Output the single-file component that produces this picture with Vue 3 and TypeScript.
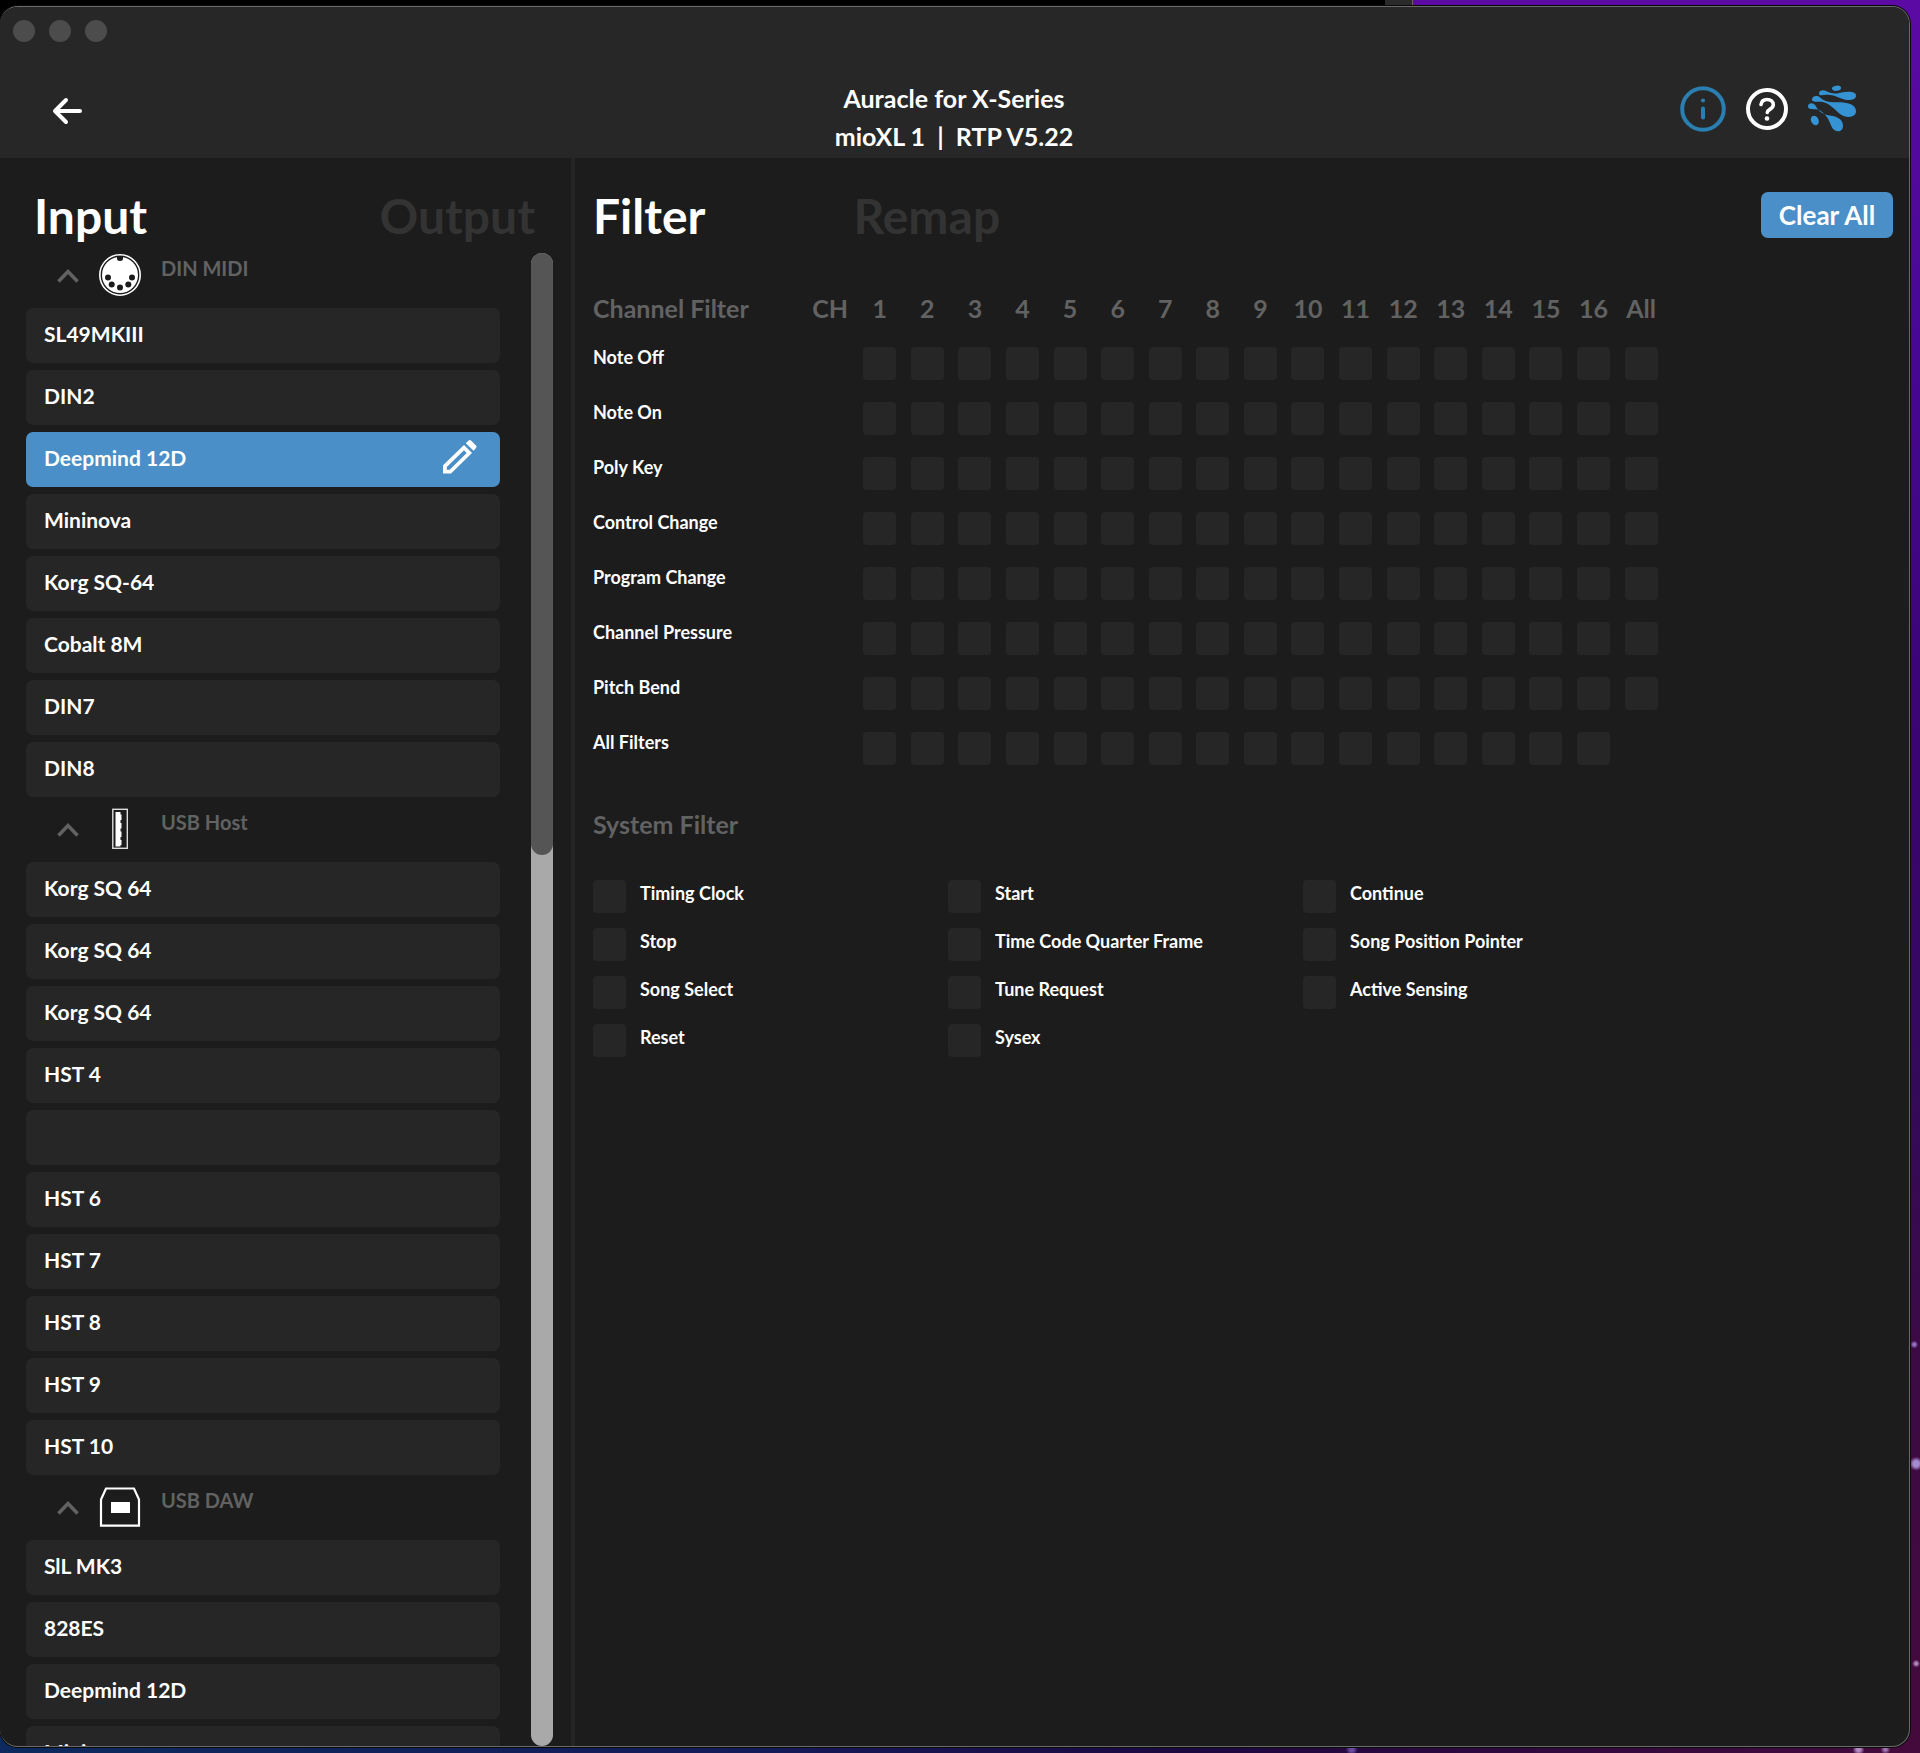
<script setup lang="ts">
import { ref } from 'vue'

type GroupIcon = 'din' | 'host' | 'daw'

interface PortGroup {
  name: string
  icon: GroupIcon
  ports: string[]
}

const groups: PortGroup[] = [
  {
    name: 'DIN MIDI',
    icon: 'din',
    ports: ['SL49MKIII', 'DIN2', 'Deepmind 12D', 'Mininova', 'Korg SQ-64', 'Cobalt 8M', 'DIN7', 'DIN8'],
  },
  {
    name: 'USB Host',
    icon: 'host',
    ports: ['Korg SQ 64', 'Korg SQ 64', 'Korg SQ 64', 'HST 4', '', 'HST 6', 'HST 7', 'HST 8', 'HST 9', 'HST 10'],
  },
  {
    name: 'USB DAW',
    icon: 'daw',
    ports: ['SlL MK3', '828ES', 'Deepmind 12D', 'Mininova'],
  },
]

const selected = ref('0-2')

const channels: string[] = [...Array.from({ length: 16 }, (_, i) => String(i + 1)), 'All']

const messages: string[] = [
  'Note Off',
  'Note On',
  'Poly Key',
  'Control Change',
  'Program Change',
  'Channel Pressure',
  'Pitch Bend',
  'All Filters',
]

const systemFilters: string[] = [
  'Timing Clock',
  'Start',
  'Continue',
  'Stop',
  'Time Code Quarter Frame',
  'Song Position Pointer',
  'Song Select',
  'Tune Request',
  'Active Sensing',
  'Reset',
  'Sysex',
]

const channelState = ref<Record<string, boolean>>({})
const systemState = ref<Record<string, boolean>>({})

function hasBox(message: string, channel: string): boolean {
  return !(message === 'All Filters' && channel === 'All')
}

function clearAll(): void {
  channelState.value = {}
  systemState.value = {}
}
</script>

<template>
  <div class="desktop">
    <div class="window-behind"></div>
    <div class="window">
      <header class="header">
        <div class="lights"><i></i><i></i><i></i></div>
        <div class="toolbar">
          <button class="icon-button" aria-label="Back">
            <svg width="32" height="34" viewBox="0 0 32 34" fill="none" stroke="#fff" stroke-width="4" stroke-linecap="round" stroke-linejoin="round">
              <path d="M28 19H3M14 8 3 19l11 11" />
            </svg>
          </button>
          <h1 class="title">Auracle for X-Series<br />mioXL 1 &nbsp;|&nbsp; RTP V5.22</h1>
          <div class="actions">
            <button class="icon-button" aria-label="Info">
              <svg width="46" height="46" viewBox="0 0 46 46" fill="none" stroke="#2a7eb0">
                <circle cx="23" cy="23" r="20.8" stroke-width="4" />
                <path d="M23 22.5v9" stroke-width="4" stroke-linecap="round" />
                <circle cx="23" cy="14.5" r="2.1" fill="#2a7eb0" stroke="none" />
              </svg>
            </button>
            <button class="icon-button" aria-label="Help">
              <svg width="44" height="44" viewBox="0 0 44 44" fill="none" stroke="#fff" stroke-width="4">
                <circle cx="22" cy="22" r="19" />
                <path d="M16 17.5c.6-3.5 3-5 6-5 3.6 0 6.3 2.2 6.3 5.3 0 4.6-6 4.400-6 7.600" stroke-width="3.6" stroke-linecap="round" />
                <circle cx="22" cy="31.5" r="2.3" fill="#fff" stroke="none" />
              </svg>
            </button>
            <button class="icon-button" aria-label="iConnectivity">
              <svg width="48" height="48" viewBox="0 0 48 48" fill="#3592d3">
                <ellipse cx="28.5" cy="3.2" rx="4.600" ry="2.600" transform="rotate(-8 28.5 3.2)" />
                <path d="M11 8.500C11 5.500 15 4.500 18 6c4 2 8 3 12 2.200C35 6.800 48 5 48 10.500c0 5.500-9 5.300-14 3.300-6-2.800-12-4.500-16-4-4 .7-7 1-7-1.300Z" />
                <path d="M4 14.500C4 11 9 10 12 12.500c4 3.500 9 5 15 4.800C36 16.800 48 18 48 26c0 7-10 7.500-16 3-5-4-9-9.500-17-12-4-1-11 1-11-2.500Z" />
                <path d="M0 21.500C0 18 5 17 7.500 20.500 10 25 13 28.500 19 30c8 1 16 3 16 11 0 7-9 7-11.500.5C21 35 18 28.500 11 25 7 23.500 0 25.500 0 21.500Z" />
                <ellipse cx="6.800" cy="35.500" rx="3.800" ry="5" transform="rotate(-25 6.800 35.500)" />
              </svg>
            </button>
          </div>
        </div>
      </header>

      <div class="body">
        <aside class="sidebar">
          <nav class="tabs side-tabs">
            <button class="tab active">Input</button>
            <button class="tab">Output</button>
          </nav>
          <div class="scroller">
            <div class="port-list">
              <section v-for="(group, g) in groups" :key="group.name" class="group">
                <div class="group-head">
                  <button class="icon-button" :aria-label="`Collapse ${group.name}`">
                    <svg width="22" height="16" viewBox="0 0 22 16" fill="none" stroke="#626262" stroke-width="3.5">
                      <path d="m1.500 13.500 9.500-10 9.500 10" />
                    </svg>
                  </button>
                  <svg v-if="group.icon === 'din'" width="42" height="42" viewBox="0 0 42 42">
                    <circle cx="21" cy="21" r="20.2" fill="#1c1c1c" stroke="#fff" stroke-width="1.6" />
                    <circle cx="21" cy="21" r="18" fill="#fff" />
                    <path d="M18 2.500h6v2a3 2.500 0 0 1-6 0Z" fill="#1c1c1c" />
                    <g fill="#1c1c1c">
                      <circle cx="9" cy="23.5" r="3" />
                      <circle cx="12.7" cy="30.5" r="3" />
                      <circle cx="21" cy="33.5" r="3" />
                      <circle cx="29.3" cy="30.5" r="3" />
                      <circle cx="33" cy="23.5" r="3" />
                    </g>
                  </svg>
                  <svg v-else-if="group.icon === 'host'" width="42" height="42" viewBox="0 0 42 42">
                    <rect x="13.8" y="1.3" width="14.5" height="39" fill="none" stroke="#ddd" stroke-width="1.4" />
                    <path d="M16.500 4h5v2.500h1v5.500h-1v3h1v5.500h-1v3h1V29h-1v3h1v5h-1v1.500h-5Z" fill="#fff" />
                  </svg>
                  <svg v-else width="42" height="42" viewBox="0 0 42 42">
                    <path d="M7 2.500h28l5 11v26.200H2V13.500Z" fill="none" stroke="#fff" stroke-width="2.2" />
                    <rect x="12" y="16" width="19" height="11" fill="#fff" />
                  </svg>
                  <span class="group-name">{{ group.name }}</span>
                </div>
                <button
                  v-for="(port, p) in group.ports"
                  :key="p"
                  class="port"
                  :class="{ selected: selected === `${g}-${p}` }"
                  @click="selected = `${g}-${p}`"
                >
                  <span>{{ port }}</span>
                  <svg v-if="selected === `${g}-${p}`" width="36" height="36" viewBox="0 0 36 36" fill="#fff">
                    <path d="M1 34.500v-8.200L22 6l8 8L9 34.500Zm3.800-3.800h2.900L24.700 14l-2.700-2.700L4.800 27.900Z" fill-rule="evenodd" />
                    <path d="m23.800 4.200 2.800-2.700q1.200-1 2.400 0l5 5q1.200 1.200 0 2.400l-2.400 2.800Z" />
                  </svg>
                </button>
              </section>
            </div>
            <div class="track"><div class="thumb"></div></div>
          </div>
        </aside>

        <main class="main">
          <div class="main-head">
            <nav class="tabs main-tabs">
              <button class="tab active">Filter</button>
              <button class="tab">Remap</button>
            </nav>
            <button class="clear" @click="clearAll">Clear All</button>
          </div>

          <table class="channels">
            <thead>
              <tr>
                <th class="label-col" scope="col">
                  <div class="corner"><span>Channel Filter</span><span>CH</span></div>
                </th>
                <th v-for="channel in channels" :key="channel" scope="col">{{ channel }}</th>
              </tr>
            </thead>
            <tbody>
              <tr v-for="message in messages" :key="message">
                <th scope="row">{{ message }}</th>
                <td v-for="channel in channels" :key="channel">
                  <input
                    v-if="hasBox(message, channel)"
                    v-model="channelState[`${message}-${channel}`]"
                    type="checkbox"
                    class="box"
                    :aria-label="`${message}, channel ${channel}`"
                  />
                </td>
              </tr>
            </tbody>
          </table>

          <h2 class="system-title">System Filter</h2>
          <div class="system">
            <label v-for="name in systemFilters" :key="name" class="system-item">
              <input v-model="systemState[name]" type="checkbox" class="box" />
              <span>{{ name }}</span>
            </label>
          </div>
        </main>
      </div>
    </div>
  </div>
</template>

<style>
body {
  margin: 0;
  background: #000;
}
</style>

<style scoped>
.desktop {
  box-sizing: border-box;
  position: relative;
  height: 100vh;
  padding: 6px 10px 6px 0;
  overflow: hidden;
  font-family: Lato, sans-serif;
  font-weight: 700;
  color: #fff;
  background:
    linear-gradient(90deg, #000 73%, transparent 73%) top / 100% 24px no-repeat,
    radial-gradient(circle at 99.8% 83.5%, #a58ad0 3px, transparent 7px),
    radial-gradient(circle at 99.7% 76.7%, #9a74c4 1px, transparent 4px),
    radial-gradient(circle at 99.8% 94.9%, #b48ac0 1px, transparent 4px),
    radial-gradient(circle at 98.2% 99.8%, #a37ab8 1px, transparent 5px),
    radial-gradient(circle at 96.8% 99.8%, #b48ac0 2px, transparent 6px),
    radial-gradient(circle at 70.400% 99.8%, #6a4aa0 2px, transparent 6px),
    linear-gradient(90deg, #0c2a5e, #141a58 40%, #1c0840 62%, #450a3c) bottom / 100% 24px no-repeat,
    linear-gradient(#5c0aa4, #470894 20%, #3a0472 42%, #330a5a 62%, #3c0a44 78%, #450a3c);
}

.window-behind {
  position: absolute;
  top: 0;
  left: 72%;
  width: 27px;
  height: 6px;
  border-left: 3px solid #000;
  border-right: 1px solid #666;
  background: #2a2a2a;
}

.window {
  box-sizing: border-box;
  position: relative;
  display: flex;
  flex-direction: column;
  height: 100%;
  overflow: hidden;
  border: 1px solid #6a6a6a;
  border-left: 0;
  border-radius: 18px;
  background: #1c1c1c;
  box-shadow: 0 0 0 1px #0a0a0a;
}

button {
  margin: 0;
  padding: 0;
  border: 0;
  background: none;
  color: inherit;
  font: inherit;
  cursor: pointer;
}

svg {
  display: block;
}

.header {
  flex: none;
  height: 151px;
  background: #272727;
}

.lights {
  display: flex;
  gap: 14px;
  padding: 13px 13px 0;
}

.lights i {
  width: 22px;
  height: 22px;
  border-radius: 50%;
  background: #4c4c4c;
}

.toolbar {
  display: grid;
  grid-template-columns: 1fr auto 1fr;
  align-items: center;
  height: 92px;
  margin-top: 21px;
  padding: 0 53px 0 52px;
}

.title {
  align-self: end;
  margin: 0;
  font-size: 25px;
  line-height: 38px;
  text-align: center;
}

.actions {
  display: flex;
  align-items: center;
  justify-content: flex-end;
  gap: 19px;
}

.body {
  display: flex;
  flex: 1;
  min-height: 0;
}

.sidebar {
  box-sizing: border-box;
  display: flex;
  flex: none;
  flex-direction: column;
  width: 575px;
  border-right: 4px solid #252525;
}

.tabs {
  display: flex;
}

.tab {
  font-size: 48px;
  line-height: 64px;
  color: #333;
}

.tab.active {
  color: #fff;
}

.side-tabs {
  justify-content: space-between;
  padding: 26px 36px 5px 34px;
}

.scroller {
  display: flex;
  flex: 1;
  justify-content: space-between;
  min-height: 0;
  padding: 0 18px 0 26px;
}

.port-list {
  width: 474px;
  overflow: hidden;
}

.group + .group {
  margin-top: 10px;
}

.group-head {
  box-sizing: border-box;
  display: flex;
  align-items: flex-start;
  gap: 20px;
  height: 55px;
  padding: 1px 0 0 31px;
}

.group-head .icon-button {
  padding-top: 14px;
}

.group-name {
  font-size: 20px;
  line-height: 28px;
  color: #626262;
}

.port {
  display: flex;
  box-sizing: border-box;
  align-items: center;
  justify-content: space-between;
  width: 100%;
  height: 55px;
  padding: 0 22px 4px 18px;
  border-radius: 7px;
  background: #262626;
  font-size: 21px;
  text-align: left;
}

.port + .port {
  margin-top: 7px;
}

.port.selected {
  background: #4a8fc8;
}

.port svg {
  margin-bottom: 2px;
}

.track {
  width: 22px;
  border-radius: 11px;
  background: #a9a9a9;
}

.thumb {
  height: calc(40% + 5px);
  border-radius: 11px;
  background: #555;
}

.main {
  flex: 1;
  min-width: 0;
  padding: 26px 16px 0 18px;
}

.main-head {
  display: flex;
  justify-content: space-between;
}

.main-tabs {
  gap: 148px;
}

.clear {
  width: 132px;
  height: 46px;
  margin-top: 8px;
  border-radius: 7px;
  background: #4a8fc8;
  font-size: 26px;
  line-height: 44px;
}

.channels {
  width: 100%;
  max-width: 1072px;
  margin-top: 42px;
  border-collapse: collapse;
  table-layout: fixed;
}

.channels th,
.channels td {
  padding: 0;
  font-weight: 700;
}

.channels thead th {
  height: 57px;
  font-size: 25px;
  line-height: 36px;
  color: #626262;
  vertical-align: top;
}

.channels .label-col {
  width: 263px;
}

.corner {
  display: flex;
  justify-content: space-between;
  padding-right: 8px;
}

.channels tbody tr {
  height: 55px;
}

.channels tbody th {
  font-size: 18px;
  line-height: 20px;
  text-align: left;
  vertical-align: top;
}

.channels td {
  text-align: center;
  vertical-align: top;
}

.box {
  appearance: none;
  display: block;
  width: 33px;
  height: 33px;
  margin: 0;
  border-radius: 4px;
  background: #262626;
}

.box:checked {
  background: #4a8fc8;
}

.channels .box {
  margin: 0 auto;
}

.system-title {
  margin: 19px 0 38px;
  font-size: 25px;
  line-height: 36px;
  color: #626262;
}

.system {
  display: grid;
  grid-template-columns: repeat(3, 355px);
  grid-auto-rows: 33px;
  row-gap: 15px;
}

.system-item {
  display: flex;
  gap: 14px;
  font-size: 18px;
  line-height: 26px;
}
</style>
